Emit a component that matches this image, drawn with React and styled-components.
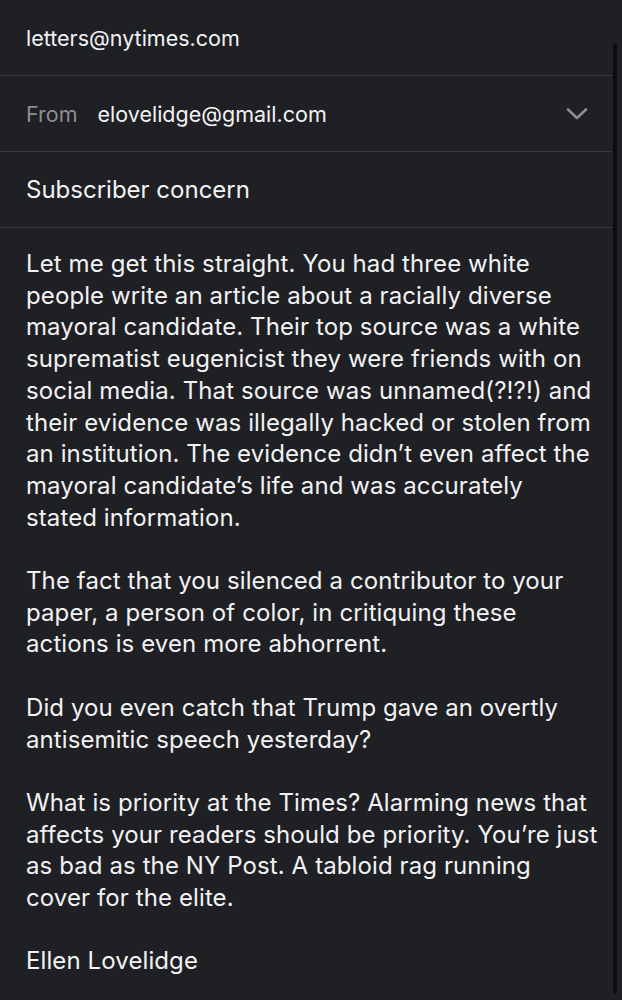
import React from 'react'
import styled, { createGlobalStyle } from 'styled-components'

const GlobalStyle = createGlobalStyle`
  html, body {
    margin: 0;
    padding: 0;
    background: #1f2023;
  }
  body {
    font-family: Inter, "Liberation Sans", sans-serif;
    -webkit-font-smoothing: antialiased;
  }
`

const Screen = styled.div`
  position: relative;
  width: 622px;
  height: 1000px;
  overflow: hidden;
  background: #1f2023;
  color: #f2f2f4;
  padding-right: 10px;
  box-sizing: border-box;
`

const Field = styled.div`
  display: flex;
  align-items: center;
  height: 75px;
  padding: 0 26px;
  border-bottom: 1.5px solid #3a3a3e;
  font-size: ${(props) => (props.subject ? '24px' : '21.5px')};
  letter-spacing: 0;
  gap: 20px;
`

const Label = styled.span`
  color: #8d8d92;
`

const Value = styled.span`
  flex: 1;
  color: #f2f2f4;
`

const Chevron = styled.svg`
  width: 22px;
  height: 14px;
  margin-right: -2px;
`

const Body = styled.div`
  padding: 20px 26px 0;
  font-size: 24px;
  line-height: 31.7px;
  letter-spacing: 0.1px;
  white-space: nowrap;
`

const Paragraph = styled.p`
  margin: 0 0 31.7px;
`

const ScrollIndicator = styled.div`
  position: absolute;
  top: 43px;
  right: 5px;
  width: 4px;
  height: 951px;
  border-radius: 2px;
  background: #0e0e10;
`

const paragraphs = [
  [
    'Let me get this straight. You had three white',
    'people write an article about a racially diverse',
    'mayoral candidate. Their top source was a white',
    'suprematist eugenicist they were friends with on',
    'social media. That source was unnamed(?!?!) and',
    'their evidence was illegally hacked or stolen from',
    'an institution. The evidence didn\u2019t even affect the',
    'mayoral candidate\u2019s life and was accurately',
    'stated information.',
  ],
  [
    'The fact that you silenced a contributor to your',
    'paper, a person of color, in critiquing these',
    'actions is even more abhorrent.',
  ],
  [
    'Did you even catch that Trump gave an overtly',
    'antisemitic speech yesterday?',
  ],
  [
    'What is priority at the Times? Alarming news that',
    'affects your readers should be priority. You\u2019re just',
    'as bad as the NY Post. A tabloid rag running',
    'cover for the elite.',
  ],
  ['Ellen Lovelidge'],
]

export default function App() {
  return (
    <Screen>
      <GlobalStyle />
      <Field>
        <Value>letters@nytimes.com</Value>
      </Field>
      <Field>
        <Label>From</Label>
        <Value>elovelidge@gmail.com</Value>
        <Chevron viewBox="0 0 22 14">
          <path d="M2 2.5 L11 11 L20 2.5" fill="none" stroke="#8d8d92" strokeWidth="2.6" strokeLinecap="round" strokeLinejoin="round" />
        </Chevron>
      </Field>
      <Field subject>
        <Value>Subscriber concern</Value>
      </Field>
      <Body>
        {paragraphs.map((lines, i) => (
          <Paragraph key={i}>
            {lines.map((line, j) => (
              <React.Fragment key={j}>
                {line}
                {j < lines.length - 1 && <br />}
              </React.Fragment>
            ))}
          </Paragraph>
        ))}
      </Body>
      <ScrollIndicator />
    </Screen>
  )
}
